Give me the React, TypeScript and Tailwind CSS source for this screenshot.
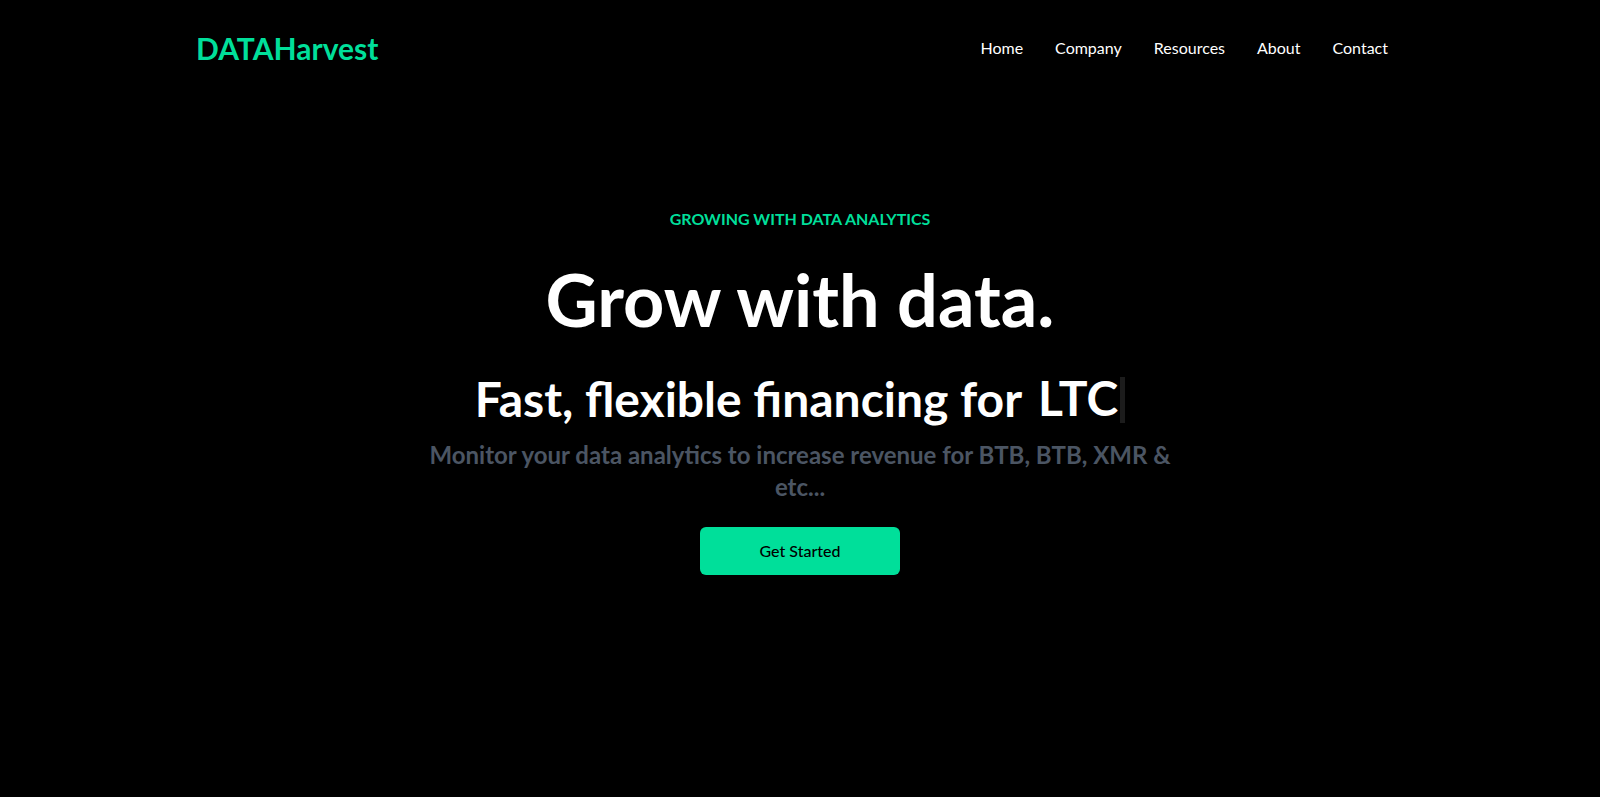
const links = ["Home", "Company", "Resources", "About", "Contact"];

const Navbar = () => {
  return (
    <div className="flex justify-between items-center h-24 max-w-[1240px] mx-auto px-4 text-white">
      <h1 className="w-full text-3xl font-bold text-[#00df9a]">DATAHarvest</h1>
      <ul className="flex">
        {links.map((l) => (
          <li key={l} className="p-4 whitespace-nowrap">
            {l}
          </li>
        ))}
      </ul>
    </div>
  );
};

const Hero = () => {
  return (
    <div className="text-white">
      <div className="max-w-[800px] mt-[-96px] w-full h-screen mx-auto text-center flex flex-col justify-center">
        <p className="text-[#00df9a] font-bold p-2">GROWING WITH DATA ANALYTICS</p>
        <h1 className="text-7xl font-bold py-6 leading-none">Grow with data.</h1>
        <div className="flex justify-center items-center">
          <p className="text-5xl font-bold py-4 leading-none">Fast, flexible financing for</p>
          <span className="text-5xl font-bold pl-4 leading-none">
            LTC<span className="inline-block w-[5px] h-[46px] bg-[#1c1c1c] align-middle ml-[2px] -mt-2"></span>
          </span>
        </div>
        <p className="text-2xl font-bold text-[#4b5563] leading-8">
          Monitor your data analytics to increase revenue for BTB, BTB, XMR &amp;
          <br />
          etc...
        </p>
        <button className="bg-[#00df9a] w-[200px] rounded-md font-medium my-6 mx-auto py-3 text-black">
          Get Started
        </button>
      </div>
    </div>
  );
};

const App = () => {
  return (
    <div className="bg-black min-h-screen font-['Lato',sans-serif]">
      <Navbar />
      <Hero />
    </div>
  );
};

export default App;
